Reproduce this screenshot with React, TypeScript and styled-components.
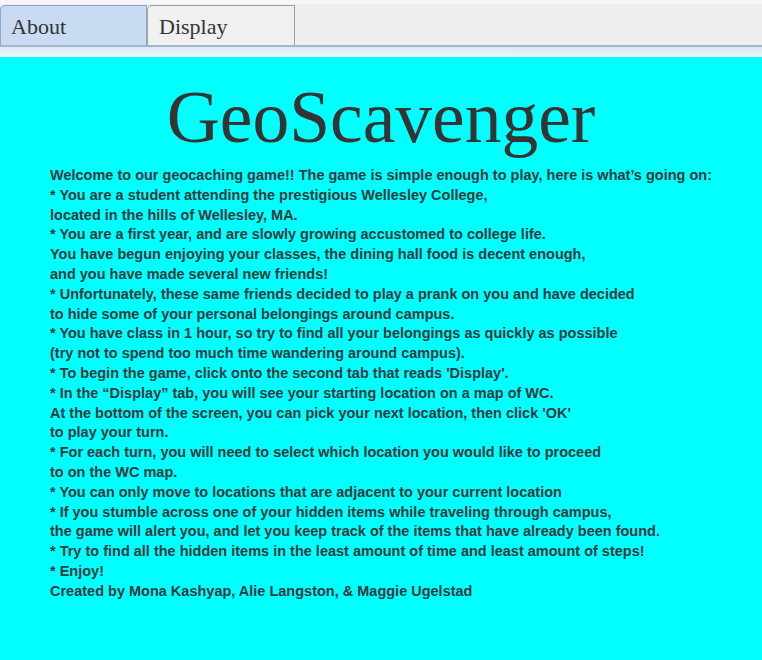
import styled, { createGlobalStyle } from "styled-components"

const lines = [
  "Welcome to our geocaching game!! The game is simple enough to play, here is what\u2019s going on:",
  "* You are a student attending the prestigious Wellesley College,",
  "located in the hills of Wellesley, MA.",
  "* You are a first year, and are slowly growing accustomed to college life.",
  "You have begun enjoying your classes, the dining hall food is decent enough,",
  "and you have made several new friends!",
  "* Unfortunately, these same friends decided to play a prank on you and have decided",
  "to hide some of your personal belongings around campus.",
  "* You have class in 1 hour, so try to find all your belongings as quickly as possible",
  "(try not to spend too much time wandering around campus).",
  "* To begin the game, click onto the second tab that reads 'Display'.",
  "* In the \u201cDisplay\u201d tab, you will see your starting location on a map of WC.",
  "At the bottom of the screen, you can pick your next location, then click 'OK'",
  "to play your turn.",
  "* For each turn, you will need to select which location you would like to proceed",
  "to on the WC map.",
  "* You can only move to locations that are adjacent to your current location",
  "* If you stumble across one of your hidden items while traveling through campus,",
  "the game will alert you, and let you keep track of the items that have already been found.",
  "* Try to find all the hidden items in the least amount of time and least amount of steps!",
  "* Enjoy!",
  "Created by Mona Kashyap, Alie Langston, & Maggie Ugelstad",
]

export default function App() {
  return (
    <>
      <Global />
      <Page>
        <TabStrip>
          <Tab $active>About</Tab>
          <Tab>Display</Tab>
        </TabStrip>
        <Divider />
        <Panel>
          <Title>GeoScavenger</Title>
          <Body>
            {lines.map((line, i) => (
              <Line key={i}>{line}</Line>
            ))}
          </Body>
        </Panel>
      </Page>
    </>
  )
}

//style

const Global = createGlobalStyle`
  html, body {
    margin: 0;
    padding: 0;
    background: #00ffff;
  }
`

const Page = styled.div`
  display: flex;
  flex-direction: column;
  width: 762px;
  height: 660px;
  overflow: hidden;
`
const TabStrip = styled.div`
  display: flex;
  align-items: flex-end;
  height: 47px;
  background: linear-gradient(#f7f7f7 0, #f7f7f7 4px, #eeeeee 4px);
  border-bottom: 2px solid #a4b6cd;
  box-sizing: border-box;
`
const Tab = styled.div<{ $active?: boolean }>`
  box-sizing: border-box;
  width: ${(p) => (p.$active ? "147px" : "148px")};
  height: 40px;
  padding: 11px 0 0 ${(p) => (p.$active ? "10px" : "11px")};
  font-family: "Liberation Serif", "Times New Roman", serif;
  font-size: 22px;
  line-height: 20px;
  color: #333333;
  background: ${(p) => (p.$active ? "#c9dbf2" : "#f0f0f0")};
  border: 1px solid ${(p) => (p.$active ? "#8ea6c9" : "#a2a2a2")};
  border-bottom: none;
  border-top-left-radius: 5px;
`
const Divider = styled.div`
  height: 10px;
  background: linear-gradient(#dbe8f3, #eef8fa);
`
const Panel = styled.div`
  flex: 1;
  background: #00ffff;
  padding-top: 20px;
`
const Title = styled.h1`
  margin: 0;
  text-align: center;
  font-family: "Liberation Serif", "Times New Roman", serif;
  font-weight: normal;
  font-size: 73.5px;
  line-height: 82px;
  color: #383333;
`
const Body = styled.div`
  padding: 7px 0 0 50px;
  font-family: "Liberation Sans", Arial, sans-serif;
  font-weight: bold;
  font-size: 14.5px;
  line-height: 19.8px;
  color: #2f3a3d;
`
const Line = styled.div`
  white-space: nowrap;
`
